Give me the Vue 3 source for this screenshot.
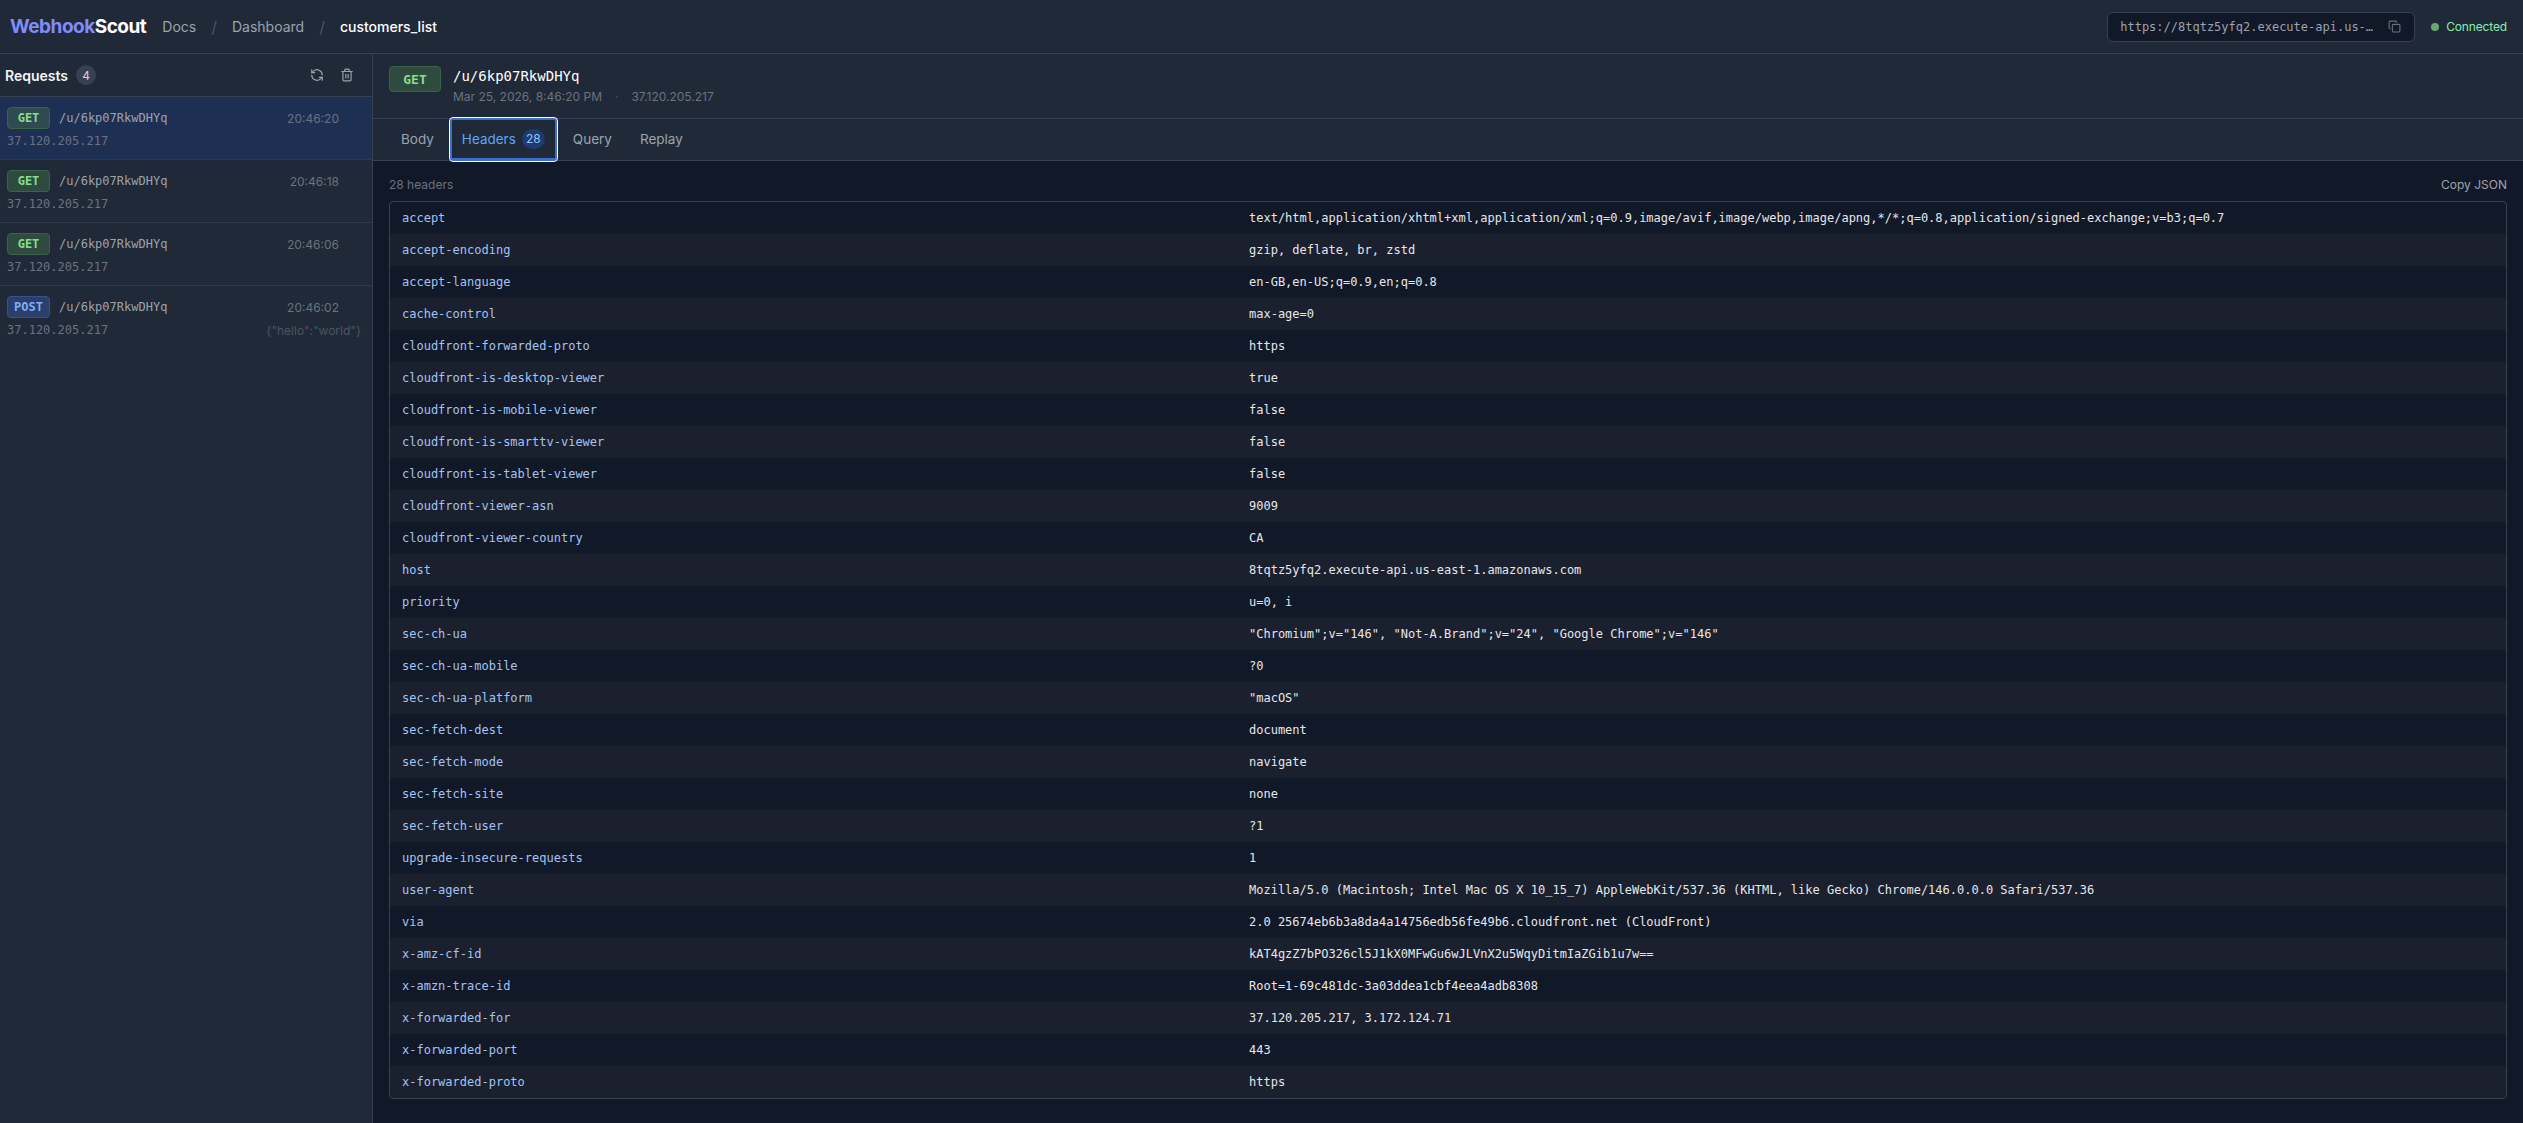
<script setup>
const requests = [
  { method: 'GET', path: '/u/6kp07RkwDHYq', time: '20:46:20', ip: '37.120.205.217', preview: '', active: true },
  { method: 'GET', path: '/u/6kp07RkwDHYq', time: '20:46:18', ip: '37.120.205.217', preview: '', active: false },
  { method: 'GET', path: '/u/6kp07RkwDHYq', time: '20:46:06', ip: '37.120.205.217', preview: '', active: false },
  { method: 'POST', path: '/u/6kp07RkwDHYq', time: '20:46:02', ip: '37.120.205.217', preview: '{"hello":"world"}', active: false },
]
const headers = [
  ['accept', 'text/html,application/xhtml+xml,application/xml;q=0.9,image/avif,image/webp,image/apng,*/*;q=0.8,application/signed-exchange;v=b3;q=0.7'],
  ['accept-encoding', 'gzip, deflate, br, zstd'],
  ['accept-language', 'en-GB,en-US;q=0.9,en;q=0.8'],
  ['cache-control', 'max-age=0'],
  ['cloudfront-forwarded-proto', 'https'],
  ['cloudfront-is-desktop-viewer', 'true'],
  ['cloudfront-is-mobile-viewer', 'false'],
  ['cloudfront-is-smarttv-viewer', 'false'],
  ['cloudfront-is-tablet-viewer', 'false'],
  ['cloudfront-viewer-asn', '9009'],
  ['cloudfront-viewer-country', 'CA'],
  ['host', '8tqtz5yfq2.execute-api.us-east-1.amazonaws.com'],
  ['priority', 'u=0, i'],
  ['sec-ch-ua', '"Chromium";v="146", "Not-A.Brand";v="24", "Google Chrome";v="146"'],
  ['sec-ch-ua-mobile', '?0'],
  ['sec-ch-ua-platform', '"macOS"'],
  ['sec-fetch-dest', 'document'],
  ['sec-fetch-mode', 'navigate'],
  ['sec-fetch-site', 'none'],
  ['sec-fetch-user', '?1'],
  ['upgrade-insecure-requests', '1'],
  ['user-agent', 'Mozilla/5.0 (Macintosh; Intel Mac OS X 10_15_7) AppleWebKit/537.36 (KHTML, like Gecko) Chrome/146.0.0.0 Safari/537.36'],
  ['via', '2.0 25674eb6b3a8da4a14756edb56fe49b6.cloudfront.net (CloudFront)'],
  ['x-amz-cf-id', 'kAT4gzZ7bPO326cl5J1kX0MFwGu6wJLVnX2u5WqyDitmIaZGib1u7w=='],
  ['x-amzn-trace-id', 'Root=1-69c481dc-3a03ddea1cbf4eea4adb8308'],
  ['x-forwarded-for', '37.120.205.217, 3.172.124.71'],
  ['x-forwarded-port', '443'],
  ['x-forwarded-proto', 'https'],
]
</script>

<template>
  <div class="app">
    <header class="topbar">
      <div class="logo"><span class="logo-a">Webhook</span><span class="logo-b">Scout</span></div>
      <nav class="crumbs">
        <span class="crumb">Docs</span>
        <span class="sep">/</span>
        <span class="crumb">Dashboard</span>
        <span class="sep">/</span>
        <span class="crumb current">customers_list</span>
      </nav>
      <div class="top-right">
        <div class="url-box">
          <span class="url-text">https://8tqtz5yfq2.execute-api.us-east-1.amazonaws.com/u/6kp07RkwDHYq</span>
          <svg class="copy" width="13" height="13" viewBox="0 0 24 24" fill="none" stroke="currentColor" stroke-width="2" stroke-linecap="round" stroke-linejoin="round">
            <rect x="8" y="8" width="14" height="14" rx="2" />
            <path d="M4 16c-1.1 0-2-.9-2-2V4c0-1.1.9-2 2-2h10c1.1 0 2 .9 2 2" />
          </svg>
        </div>
        <div class="status"><span class="dot"></span>Connected</div>
      </div>
    </header>

    <div class="main">
      <aside class="sidebar">
        <div class="side-head">
          <span class="side-title">Requests</span>
          <span class="count">4</span>
          <span class="side-actions">
            <svg width="14" height="14" viewBox="0 0 24 24" fill="none" stroke="currentColor" stroke-width="2" stroke-linecap="round" stroke-linejoin="round">
              <path d="M21 12a9 9 0 0 0-15-6.7L3 8" /><path d="M3 3v5h5" />
              <path d="M3 12a9 9 0 0 0 15 6.7l3-2.7" /><path d="M16 16h5v5" />
            </svg>
            <svg width="14" height="14" viewBox="0 0 24 24" fill="none" stroke="currentColor" stroke-width="2" stroke-linecap="round" stroke-linejoin="round">
              <path d="M3 6h18" /><path d="M19 6v14a2 2 0 0 1-2 2H7a2 2 0 0 1-2-2V6" />
              <path d="M8 6V4a2 2 0 0 1 2-2h4a2 2 0 0 1 2 2v2" /><path d="M10 11v6" /><path d="M14 11v6" />
            </svg>
          </span>
        </div>
        <div
          v-for="r in requests"
          :key="r.time"
          class="req"
          :class="{ active: r.active }"
        >
          <div class="req-line">
            <span class="badge" :class="r.method.toLowerCase()">{{ r.method }}</span>
            <span class="req-path">{{ r.path }}</span>
            <span class="req-time">{{ r.time }}</span>
          </div>
          <div class="req-line second">
            <span class="req-ip">{{ r.ip }}</span>
            <span class="req-preview">{{ r.preview }}</span>
          </div>
        </div>
      </aside>

      <section class="detail">
        <div class="detail-head">
          <span class="badge get big">GET</span>
          <div>
            <div class="detail-path">/u/6kp07RkwDHYq</div>
            <div class="detail-meta"><span>Mar 25, 2026, 8:46:20 PM</span><span class="mid">·</span><span>37.120.205.217</span></div>
          </div>
        </div>
        <div class="tabs">
          <span class="tab">Body</span>
          <span class="tab on">Headers <span class="tab-count">28</span></span>
          <span class="tab">Query</span>
          <span class="tab">Replay</span>
        </div>
        <div class="content">
          <div class="content-head">
            <span>28 headers</span>
            <span class="copy-json">Copy JSON</span>
          </div>
          <div class="table">
            <div v-for="h in headers" :key="h[0]" class="row">
              <span class="k">{{ h[0] }}</span>
              <span class="v">{{ h[1] }}</span>
            </div>
          </div>
        </div>
      </section>
    </div>
  </div>
</template>

<style>
html, body { margin: 0; background: #111827; }
</style>

<style scoped>
.app {
  width: 2523px;
  height: 1123px;
  overflow: hidden;
  display: flex;
  flex-direction: column;
  background: #111827;
  color: #e5e7eb;
  font-family: Inter, "Noto Sans", sans-serif;
  font-size: 14px;
}
.topbar {
  height: 53px;
  box-sizing: content-box;
  flex: none;
  display: flex;
  align-items: center;
  background: #1f2937;
  border-bottom: 1px solid #374151;
  padding: 0 16px 0 10px;
}
.logo { font-size: 19px; font-weight: 700; letter-spacing: -0.5px; }
.logo-a { color: #818cf8; }
.logo-b { color: #fff; }
.crumbs { display: flex; align-items: center; margin-left: 16px; font-size: 14px; }
.crumb { color: #9ca3af; }
.crumb.current { color: #fff; font-weight: 500; }
.sep { color: #4b5563; margin: 0 15px; font-size: 16px; }
.top-right { margin-left: auto; display: flex; align-items: center; gap: 16px; }
.url-box {
  width: 308px;
  height: 30px;
  box-sizing: border-box;
  display: flex;
  align-items: center;
  gap: 14px;
  padding: 0 13px 0 12px;
  background: #111827;
  border: 1px solid #374151;
  border-radius: 6px;
  color: #9ca3af;
}
.url-text {
  flex: 1;
  min-width: 0;
  overflow: hidden;
  white-space: nowrap;
  text-overflow: ellipsis;
  font-family: "DejaVu Sans Mono", monospace;
  font-size: 12px;
}
.copy { flex: none; color: #6b7280; }
.status { display: flex; align-items: center; gap: 7px; color: #86efac; font-size: 12px; letter-spacing: -0.15px; }
.dot { width: 8px; height: 8px; border-radius: 50%; background: #68a86f; }
.main { flex: 1; min-height: 0; display: flex; }
.sidebar {
  width: 372px;
  flex: none;
  background: #1f2937;
  border-right: 1px solid #374151;
}
.side-head {
  height: 42px;
  box-sizing: content-box;
  display: flex;
  align-items: center;
  gap: 8px;
  padding: 0 18px 0 5px;
  border-bottom: 1px solid #374151;
}
.side-title { color: #f3f4f6; font-weight: 600; font-size: 14px; }
.count {
  width: 20px;
  height: 20px;
  border-radius: 50%;
  background: #374151;
  color: #d1d5db;
  font-size: 12px;
  display: flex;
  align-items: center;
  justify-content: center;
}
.side-actions { margin-left: auto; display: flex; gap: 16px; color: #9ca3af; }
.req {
  height: 63px;
  box-sizing: border-box;
  padding: 10px 11px 0 7px;
  border-bottom: 1px solid #2f3a4b;
}
.req:last-child { border-bottom: 0; }
.req.active { background: #1e2f54; }
.req-line { display: flex; align-items: center; height: 22px; }
.req-line.second { margin-top: 1px; }
.badge {
  width: 43px;
  height: 22px;
  box-sizing: border-box;
  display: flex;
  align-items: center;
  justify-content: center;
  flex: none;
  border-radius: 4px;
  font-family: "DejaVu Sans Mono", monospace;
  font-size: 12px;
  font-weight: 700;
}
.badge.get { background: #2f4a3e; border: 1px solid #3b6349; color: #86de8a; }
.active .badge.get { background: #2e4c50; }
.badge.post { background: #2a3f6a; border: 1px solid #34528c; color: #7eaefb; }
.badge.big { width: 52px; height: 26px; font-size: 13px; }
.req-path {
  margin-left: 9px;
  font-family: "DejaVu Sans Mono", monospace;
  font-size: 12px;
  color: #9ca3af;
}
.req-time { margin-left: auto; margin-right: 22px; color: #6b7280; font-size: 12px; }
.req-ip { font-family: "DejaVu Sans Mono", monospace; font-size: 12px; color: #6b7280; }
.req-preview { margin-left: auto; font-size: 12px; color: #4b5563; }
.detail { flex: 1; min-width: 0; display: flex; flex-direction: column; }
.detail-head {
  height: 65px;
  flex: none;
  box-sizing: border-box;
  background: #1f2937;
  border-bottom: 1px solid #374151;
  display: flex;
  gap: 12px;
  padding: 12px 16px 0;
}
.detail-path {
  font-family: "DejaVu Sans Mono", monospace;
  font-size: 14px;
  color: #fff;
  line-height: 18px;
  margin-top: 1px;
}
.detail-meta { display: flex; gap: 13px; margin-top: 4px; font-size: 12px; color: #6b7280; line-height: 16px; }
.mid { color: #4b5563; }
.tabs {
  height: 42px;
  flex: none;
  box-sizing: border-box;
  display: flex;
  align-items: center;
  gap: 4px;
  padding: 0 16px 1px;
  background: #1f2937;
  border-bottom: 1px solid #374151;
}
.tab { padding: 0 12px; color: #9ca3af; font-size: 13.5px; white-space: nowrap; }
.tab.on {
  display: flex;
  align-items: center;
  gap: 6px;
  height: 43px;
  padding: 0 10px;
  box-sizing: border-box;
  color: #60a5fa;
  border: 2px solid #3b6fd0;
  border-bottom-width: 3px;
  outline: 1px solid #fff;
  border-radius: 3px;
}
.tab-count {
  height: 20px;
  min-width: 23px;
  border-radius: 10px;
  background: #1e3a6f;
  color: #93c5fd;
  font-size: 12px;
  display: flex;
  align-items: center;
  justify-content: center;
}
.content { flex: 1; min-height: 0; padding: 0 16px; }
.content-head {
  height: 40px;
  padding-top: 6px;
  box-sizing: border-box;
  display: flex;
  align-items: center;
  justify-content: space-between;
  font-size: 12px;
  color: #6b7280;
}
.copy-json { color: #9ca3af; }
.table { border: 1px solid #374151; border-radius: 4px; overflow: hidden; }
.row { height: 32px; display: flex; align-items: center; font-family: "DejaVu Sans Mono", monospace; font-size: 12px; }
.row:nth-child(even) { background: #1a202d; }
.k { width: 859px; flex: none; padding-left: 12px; box-sizing: border-box; color: #a3c4f3; }
.v { color: #e5e7eb; white-space: pre; }
</style>
